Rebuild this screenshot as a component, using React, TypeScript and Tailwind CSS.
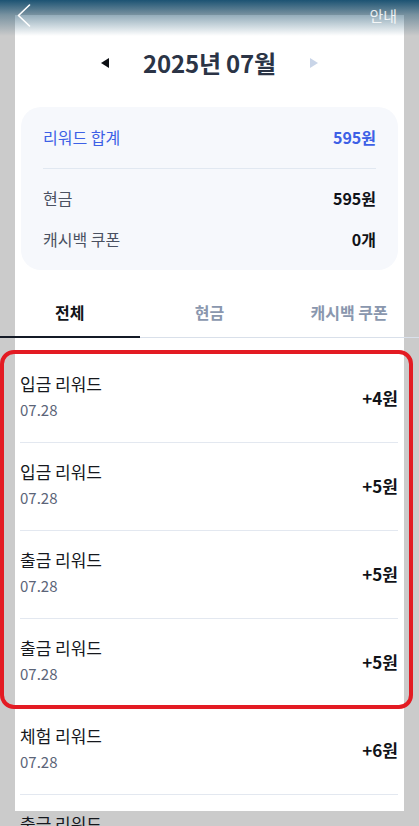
import React from "react";

const rows = [
  { title: "입금 리워드", date: "07.28", amount: "+4원" },
  { title: "입금 리워드", date: "07.28", amount: "+5원" },
  { title: "출금 리워드", date: "07.28", amount: "+5원" },
  { title: "출금 리워드", date: "07.28", amount: "+5원" },
  { title: "체험 리워드", date: "07.28", amount: "+6원" },
  { title: "출금 리워드", date: "07.28", amount: "+5원" },
];

function SummaryRow({ label, value, tone }: { label: string; value: string; tone: "blue" | "plain" }) {
  return (
    <div className="flex h-[22px] items-center justify-between">
      <span className={tone === "blue" ? "text-[16px] text-[#3d60e6]" : "text-[16px] text-[#4a5161]"}>{label}</span>
      <span className={tone === "blue" ? "text-[16px] font-bold text-[#3d60e6]" : "text-[16px] font-bold text-[#111318]"}>
        {value}
      </span>
    </div>
  );
}

export default function App() {
  return (
    <div
      className="relative h-[826px] w-[419px] overflow-hidden bg-[#cbcbcb]"
      style={{ fontFamily: '"Noto Sans CJK KR", "Noto Sans", sans-serif' }}
    >
      {/* top header overlay */}
      <div className="pointer-events-none absolute inset-x-0 top-0 z-10 h-[36px] bg-[linear-gradient(to_bottom,#1c5373_0px,rgba(40,90,118,0.5)_15px,rgba(60,100,125,0)_36px)]" />
      <div className="absolute inset-x-0 top-0 z-20 flex h-[32px] items-center justify-between pl-[17px] pr-[22px]">
        <svg width="14" height="24" viewBox="0 0 14 24" fill="none">
          <polyline points="12.5,1 1.5,11.5 12.5,22" stroke="#ffffff" strokeWidth="1.6" strokeLinecap="round" strokeLinejoin="round" />
        </svg>
        <span className="text-[15px] text-white/85">안내</span>
      </div>

      <div className="mx-[15px] mt-[15px] h-[796px] bg-white">
        {/* month selector */}
        <div className="flex h-[30px] translate-y-[33px] items-center justify-center gap-[34px]">
          <svg width="8" height="10" viewBox="0 0 8 10">
            <polygon points="8,0 0,5 8,10" fill="#0d0f14" />
          </svg>
          <span className="text-[24px] font-bold tracking-[-0.2px] text-[#2b3446]">2025년 07월</span>
          <svg width="8" height="10" viewBox="0 0 8 10">
            <polygon points="0,0 8,5 0,10" fill="#c9d5e8" />
          </svg>
        </div>

        {/* summary card */}
        <div className="mx-[6px] mt-[62px] rounded-[20px] bg-[#f6f8fc] px-[22px] pb-[20px] pt-[19px]">
          <SummaryRow label="리워드 합계" value="595원" tone="blue" />
          <div className="mt-[20px] h-px bg-[#e1e8f1]" />
          <div className="mt-[18px]">
            <SummaryRow label="현금" value="595원" tone="plain" />
          </div>
          <div className="mt-[19px]">
            <SummaryRow label="캐시백 쿠폰" value="0개" tone="plain" />
          </div>
        </div>

        {/* tabs */}
        <div className="-mx-[15px] mt-[20px] flex h-[48px] border-b border-[#d9e0ea]">
          <div className="-mb-px flex flex-1 items-center justify-center border-b-2 border-[#141a26] pb-[2px] text-[16px] font-bold text-[#111318]">
            전체
          </div>
          <div className="flex flex-1 items-center justify-center pb-[3px] text-[16px] font-semibold text-[#8a97ae]">
            현금
          </div>
          <div className="flex flex-1 items-center justify-center pb-[3px] text-[16px] font-semibold text-[#8a97ae]">
            캐시백 쿠폰
          </div>
        </div>

        {/* list */}
        <div className="ml-[5px] mr-[6px] mt-[17px]">
          {rows.map((r, i) => (
            <div key={i} className="flex h-[88px] items-start justify-between border-b border-[#e3e8f0] pt-[18px]">
              <div className="flex flex-col">
                <span className="text-[17px] leading-[22px] text-[#16181d]">{r.title}</span>
                <span className="mt-[5px] text-[15px] leading-[20px] text-[#5b6478]">{r.date}</span>
              </div>
              <span className="mt-[14px] text-[17px] leading-[22px] font-bold text-[#111318]">{r.amount}</span>
            </div>
          ))}
        </div>
      </div>

      {/* red annotation box */}
      <div className="pointer-events-none absolute left-0 top-[350px] z-30 h-[359px] w-[413px] rounded-[14px] border-[4px] border-[#e31b23]" />
    </div>
  );
}
